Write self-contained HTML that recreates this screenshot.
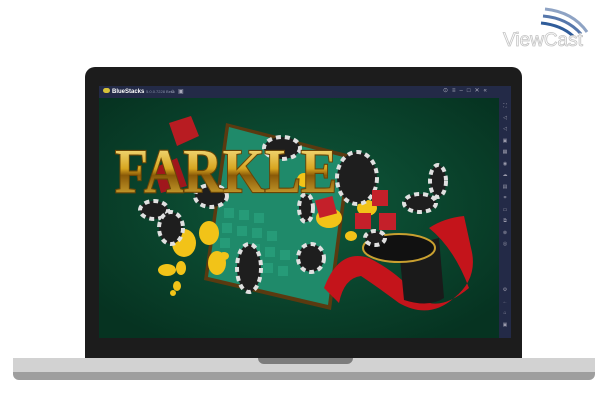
<!DOCTYPE html>
<html><head><style>
body{margin:0;width:602px;height:414px;background:#fff;position:relative;overflow:hidden;font-family:"Liberation Sans",sans-serif}
.abs{position:absolute}
</style></head><body>
<svg class="abs" style="left:495px;top:0" width="107" height="55">
<path d="M50 9 Q78 12 92 32" stroke="#8ea3c4" stroke-width="3" fill="none"/>
<path d="M48 16 Q72 18 86 34" stroke="#5677ab" stroke-width="3" fill="none"/>
<path d="M46 23 Q66 25 78 36" stroke="#2f5c9a" stroke-width="3" fill="none"/>
<text x="8" y="46" font-size="19" fill="#fff" stroke="#c4c4c4" stroke-width="0.8" font-family="Liberation Sans">ViewCast</text>
</svg>
<div class="abs" style="left:85px;top:67px;width:437px;height:295px;background:#1c1c1c;border-radius:10px 10px 0 0"></div>
<div class="abs" style="left:99px;top:86px;width:412px;height:12px;background:#232a47"></div>
<div class="abs" style="left:103px;top:88px;width:7px;height:5px;background:#d7c23a;border-radius:3px"></div>
<div class="abs" style="left:112px;top:87px;font-size:6px;color:#fff;font-weight:bold;line-height:9px">BlueStacks <span style="font-weight:normal;color:#8890a8;font-size:4px">5.0.0.7228 Beta</span></div>
<div class="abs" style="left:171px;top:88px;font-size:6px;color:#aab;line-height:8px">⌂ &nbsp;▣</div>
<div class="abs" style="left:443px;top:87px;font-size:6px;color:#aab;line-height:9px;letter-spacing:4px">⊙≡–□✕«</div>
<div class="abs" style="left:499px;top:98px;width:12px;height:240px;background:#232a47"></div>
<div class="abs" style="left:501px;top:101px;width:8px;font-size:5px;color:#99a;line-height:11.5px;text-align:center">⛶<br>◁<br>◁<br>▣<br>▦<br>◉<br>☁<br>▤<br>⌗<br>▭<br>⧉<br>⊗<br>◎<br><br><br><br>⚙<br>←<br>⌂<br>▣</div>
<svg class="abs" style="left:99px;top:98px" width="400" height="240" viewBox="0 0 400 240">
<defs>
<radialGradient id="bg" cx="50%" cy="45%" r="65%"><stop offset="0" stop-color="#0f5a3c"/><stop offset="1" stop-color="#063321"/></radialGradient>
<linearGradient id="gold" x1="0" y1="0" x2="0" y2="1"><stop offset="0" stop-color="#fff1a0"/><stop offset="0.45" stop-color="#d7a520"/><stop offset="0.55" stop-color="#8a5a08"/><stop offset="1" stop-color="#e8c040"/></linearGradient>
</defs>
<rect width="400" height="240" fill="url(#bg)"/>
<polygon points="127,25 252,57 232,212 105,182" fill="#5a3a10"/>
<polygon points="130,29 248,60 229,207 109,179" fill="#1f8a6a"/>
<g fill="#2aa37e" opacity="0.7">
<rect x="125" y="110" width="10" height="10"/><rect x="140" y="112" width="10" height="10"/><rect x="155" y="115" width="10" height="10"/>
<rect x="123" y="125" width="10" height="10"/><rect x="138" y="128" width="10" height="10"/><rect x="153" y="130" width="10" height="10"/><rect x="168" y="133" width="10" height="10"/>
<rect x="121" y="140" width="10" height="10"/><rect x="151" y="146" width="10" height="10"/><rect x="166" y="149" width="10" height="10"/><rect x="181" y="152" width="10" height="10"/>
<rect x="164" y="165" width="10" height="10"/><rect x="179" y="168" width="10" height="10"/>
</g>
<polygon points="70,25 92,18 100,38 78,48" fill="#b81c22"/>
<polygon points="55,70 78,60 88,88 62,95" fill="#a0161c"/>
<path d="M225 190 Q240 150 270 160 Q300 175 320 200 Q340 215 370 190 Q355 150 330 130 Q345 120 365 118 L372 150 Q380 180 355 200 Q330 222 300 205 Q280 190 262 178 Q245 180 240 205 Z" fill="#c4141b"/>
<path d="M300 150 L340 140 L345 200 Q330 210 305 202 Z" fill="#1a1a1a"/>
<ellipse cx="300" cy="150" rx="36" ry="14" fill="#111" stroke="#c9a030" stroke-width="2"/>
<g fill="#f2c318">
<ellipse cx="85" cy="145" rx="12" ry="14"/><ellipse cx="110" cy="135" rx="10" ry="12"/><ellipse cx="118" cy="165" rx="9" ry="12"/>
<ellipse cx="68" cy="172" rx="9" ry="6"/><ellipse cx="82" cy="170" rx="5" ry="7"/><ellipse cx="78" cy="188" rx="4" ry="5"/><ellipse cx="74" cy="195" rx="3" ry="3"/>
<ellipse cx="125" cy="158" rx="5" ry="4"/><ellipse cx="230" cy="120" rx="13" ry="10"/><ellipse cx="268" cy="110" rx="10" ry="8"/><ellipse cx="252" cy="138" rx="6" ry="5"/><ellipse cx="205" cy="82" rx="7" ry="7"/>
</g>
<g fill="#1e1e1e" stroke="#e0e0e0" stroke-width="4" stroke-dasharray="5 4">
<ellipse cx="150" cy="170" rx="12" ry="24"/>
<ellipse cx="212" cy="160" rx="13" ry="14"/>
<ellipse cx="55" cy="112" rx="14" ry="9"/>
<ellipse cx="72" cy="130" rx="12" ry="16"/>
<ellipse cx="112" cy="98" rx="16" ry="11"/>
<ellipse cx="183" cy="50" rx="18" ry="11"/>
<ellipse cx="258" cy="80" rx="20" ry="26"/>
<ellipse cx="339" cy="83" rx="8" ry="16"/>
<ellipse cx="321" cy="105" rx="16" ry="9"/>
<ellipse cx="207" cy="110" rx="7" ry="14"/>
<ellipse cx="276" cy="140" rx="10" ry="7"/>
</g>
<g fill="#c4202a">
<rect x="218" y="100" width="18" height="18" transform="rotate(-15 227 109)"/>
<rect x="273" y="92" width="16" height="16"/>
<rect x="256" y="115" width="16" height="16"/>
<rect x="280" y="115" width="17" height="17"/>
</g>
<text x="16" y="94" font-family="Liberation Serif" font-weight="bold" font-size="62" textLength="222" lengthAdjust="spacingAndGlyphs" fill="url(#gold)" stroke="#6a4505" stroke-width="2.2" paint-order="stroke">FARKLE</text>
</svg>
<div class="abs" style="left:13px;top:358px;width:582px;height:22px;background:#9e9e9e;border-radius:0 0 6px 6px"></div>
<div class="abs" style="left:13px;top:358px;width:582px;height:14px;background:#d2d2d2"></div>
<div class="abs" style="left:258px;top:358px;width:95px;height:6px;background:#7c7c7c;border-radius:0 0 8px 8px"></div>
</body></html>
